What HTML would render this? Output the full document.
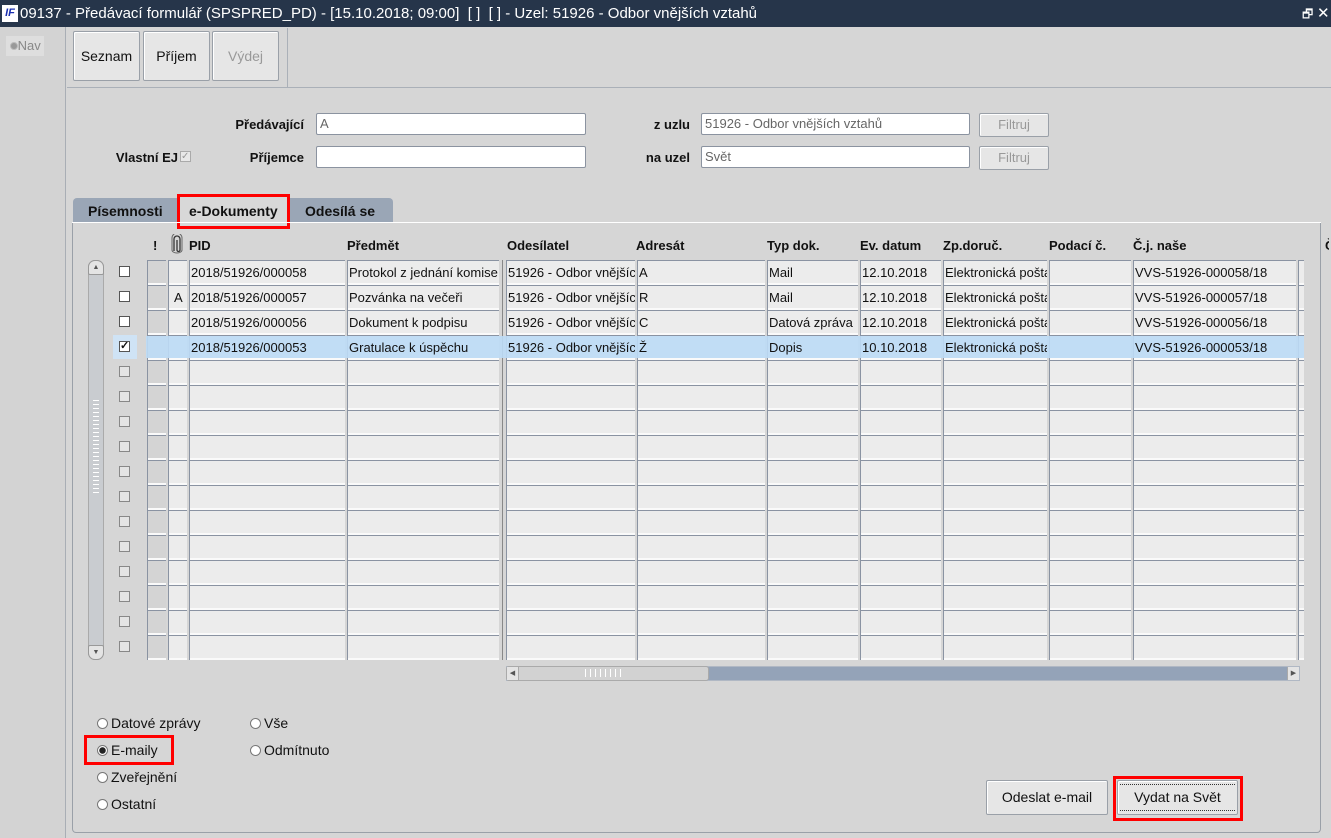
<!DOCTYPE html>
<html><head><meta charset="utf-8">
<style>
*{margin:0;padding:0;box-sizing:border-box}
body{width:1331px;height:838px;overflow:hidden;background:#d6d6d6;font-family:"Liberation Sans",Arial,sans-serif;font-size:13px;color:#111;position:relative}
.a{position:absolute}
.title{left:0;top:0;width:1331px;height:27px;background:#26354a;color:#fff;font-size:15px;line-height:28px;padding-left:20px;white-space:nowrap}
.btn{position:absolute;background:#e6e6e6;border:1px solid #9aa0a8;border-radius:2px;text-align:center;font-size:14px;box-shadow:inset 1px 1px 0 #fff}
.lbl{position:absolute;font-weight:bold;font-size:13px;text-align:right}
.inp{position:absolute;background:#fff;border:1px solid #8b93a0;border-radius:2px;height:22px;font-size:13px;line-height:20px;padding-left:3px;color:#666}
.col{position:absolute;top:260px;height:400px;border-left:1px solid #8a93a2;background:repeating-linear-gradient(to bottom,#8a93a2 0 1px,#ececec 1px 23px,#fafafa 23px 25px)}
.t{position:absolute;font-size:13px;white-space:nowrap;overflow:hidden;line-height:25px;padding-left:2px}
.h{position:absolute;top:238px;font-weight:bold;font-size:13px}
.cb{position:absolute;left:119px;width:11px;height:11px;border:1px solid #555;background:#fff}
.cbg{position:absolute;left:119px;width:11px;height:11px;border:1px solid #888;background:#e4e4e4}
.rad{position:absolute;width:11px;height:11px;border-radius:50%;border:1px solid #777;background:#fff}
.rt{position:absolute;font-size:14px}
</style></head><body>
<div class="a title"><span style="position:absolute;left:2px;top:5px;width:16px;height:17px;background:#fff;color:#1a2fb0;font-size:11px;font-weight:bold;font-style:italic;line-height:17px;text-align:center">IF</span>09137 - Předávací formulář (SPSPRED_PD) - [15.10.2018; 09:00]&nbsp; [ ]&nbsp; [ ] - Uzel: 51926 - Odbor vnějších vztahů
<span style="position:absolute;left:1302px;top:0;font-size:12px">🗗</span><span style="position:absolute;left:1317px;top:0;font-size:15px">✕</span></div>
<div class="a" style="left:0;top:27px;width:66px;height:811px;background:#d3d3d3;border-right:1px solid #a9aeb5"></div>
<div class="a" style="left:6px;top:36px;width:38px;height:20px;background:#dedede;color:#888;font-size:13px;line-height:20px">&nbsp;<span style="display:inline-block;width:8px;height:8px;border-radius:50%;background:#999;border:1px solid #bbb"></span>Nav</div>
<div class="a" style="left:67px;top:87px;width:1264px;height:1px;background:#aab0b8"></div>
<div class="a" style="left:287px;top:28px;width:1px;height:59px;background:#aab0b8"></div>
<div class="btn" style="left:73px;top:31px;width:67px;height:50px;line-height:48px">Seznam</div>
<div class="btn" style="left:143px;top:31px;width:67px;height:50px;line-height:48px">Příjem</div>
<div class="btn" style="left:212px;top:31px;width:67px;height:50px;line-height:48px;color:#999">Výdej</div>
<div class="lbl" style="left:200px;top:117px;width:104px">Předávající</div>
<div class="inp" style="left:316px;top:113px;width:270px">A</div>
<div class="lbl" style="left:90px;top:150px;width:88px">Vlastní EJ</div>
<div class="a" style="left:180px;top:151px;width:11px;height:11px;border:1px solid #aaa;background:#e8e8e8;color:#999;font-size:10px;line-height:9px">✓</div>
<div class="lbl" style="left:200px;top:150px;width:104px">Příjemce</div>
<div class="inp" style="left:316px;top:146px;width:270px"></div>
<div class="lbl" style="left:620px;top:117px;width:70px">z uzlu</div>
<div class="inp" style="left:701px;top:113px;width:269px">51926 - Odbor vnějších vztahů</div>
<div class="lbl" style="left:620px;top:150px;width:70px">na uzel</div>
<div class="inp" style="left:701px;top:146px;width:269px">Svět</div>
<div class="btn" style="left:979px;top:113px;width:70px;height:24px;line-height:22px;font-size:13px;color:#999">Filtruj</div>
<div class="btn" style="left:979px;top:146px;width:70px;height:24px;line-height:22px;font-size:13px;color:#999">Filtruj</div>
<div class="a" style="left:73px;top:198px;width:320px;height:25px;background:#9aa6b6;border-radius:4px 4px 0 0"></div>
<div class="a" style="left:88px;top:203px;font-weight:bold;font-size:14px">Písemnosti</div>
<div class="a" style="left:180px;top:197px;width:107px;height:28px;background:#d8d8d8"></div>
<div class="a" style="left:189px;top:203px;font-weight:bold;font-size:14px">e-Dokumenty</div>
<div class="a" style="left:305px;top:203px;font-weight:bold;font-size:14px">Odesílá se</div>
<div class="a" style="left:177px;top:194px;width:113px;height:35px;border:3px solid #f00"></div>
<div class="a" style="left:72px;top:223px;width:1249px;height:610px;border:1px solid #9aa0a8;border-top:none;border-radius:0 0 4px 4px"></div>
<div class="a" style="left:72px;top:222px;width:1249px;height:1px;background:#fff"></div>
<div class="h" style="left:153px">!</div>
<svg class="a" style="left:170px;top:234px" width="14" height="20" viewBox="0 0 14 20"><path d="M4 17V5a3 3 0 0 1 6 0v11a1.5 1.5 0 0 1-3 0V6" fill="none" stroke="#333" stroke-width="1.3"/><path d="M2 16V4a5 5 0 0 1 10 0v12a5 3 0 0 1-10 0" fill="none" stroke="#666" stroke-width="1"/></svg>
<div class="h" style="left:189px">PID</div>
<div class="h" style="left:347px">Předmět</div>
<div class="h" style="left:507px">Odesílatel</div>
<div class="h" style="left:636px">Adresát</div>
<div class="h" style="left:767px">Typ dok.</div>
<div class="h" style="left:860px">Ev. datum</div>
<div class="h" style="left:943px">Zp.doruč.</div>
<div class="h" style="left:1049px">Podací č.</div>
<div class="h" style="left:1133px">Č.j. naše</div>
<div class="h" style="left:1325px;width:4px;overflow:hidden">Č</div>
<div class="col" style="left:147px;width:19px;background:repeating-linear-gradient(to bottom,#8a93a2 0 1px,#d4d4d4 1px 23px,#fafafa 23px 25px)"></div>
<div class="col" style="left:168px;width:19px"></div>
<div class="col" style="left:189px;width:156px"></div>
<div class="col" style="left:347px;width:152px"></div>
<div class="a" style="left:502px;top:260px;width:1px;height:400px;background:#888"></div>
<div class="col" style="left:506px;width:129px"></div>
<div class="col" style="left:637px;width:128px"></div>
<div class="col" style="left:767px;width:91px"></div>
<div class="col" style="left:860px;width:81px"></div>
<div class="col" style="left:943px;width:104px"></div>
<div class="col" style="left:1049px;width:82px"></div>
<div class="col" style="left:1133px;width:163px"></div>
<div class="col" style="left:1298px;width:6px"></div>
<div class="a" style="left:146px;top:336px;width:1158px;height:22px;background:#bcdcf6;opacity:.9"></div>
<div class="a" style="left:113px;top:335px;width:24px;height:24px;background:#cfe3f5"></div>
<div class="t" style="left:189px;top:260px">2018/51926/000058</div>
<div class="t" style="left:347px;top:260px;width:151px">Protokol z jednání komise</div>
<div class="t" style="left:506px;top:260px;width:129px">51926 - Odbor vnějších</div>
<div class="t" style="left:637px;top:260px">A</div>
<div class="t" style="left:767px;top:260px">Mail</div>
<div class="t" style="left:860px;top:260px">12.10.2018</div>
<div class="t" style="left:943px;top:260px;width:104px">Elektronická pošta</div>
<div class="t" style="left:1133px;top:260px">VVS-51926-000058/18</div>
<div class="t" style="left:172px;top:285px">A</div>
<div class="t" style="left:189px;top:285px">2018/51926/000057</div>
<div class="t" style="left:347px;top:285px">Pozvánka na večeři</div>
<div class="t" style="left:506px;top:285px;width:129px">51926 - Odbor vnějších</div>
<div class="t" style="left:637px;top:285px">R</div>
<div class="t" style="left:767px;top:285px">Mail</div>
<div class="t" style="left:860px;top:285px">12.10.2018</div>
<div class="t" style="left:943px;top:285px;width:104px">Elektronická pošta</div>
<div class="t" style="left:1133px;top:285px">VVS-51926-000057/18</div>
<div class="t" style="left:189px;top:310px">2018/51926/000056</div>
<div class="t" style="left:347px;top:310px">Dokument k podpisu</div>
<div class="t" style="left:506px;top:310px;width:129px">51926 - Odbor vnějších</div>
<div class="t" style="left:637px;top:310px">C</div>
<div class="t" style="left:767px;top:310px;width:92px">Datová zpráva</div>
<div class="t" style="left:860px;top:310px">12.10.2018</div>
<div class="t" style="left:943px;top:310px;width:104px">Elektronická pošta</div>
<div class="t" style="left:1133px;top:310px">VVS-51926-000056/18</div>
<div class="t" style="left:189px;top:335px">2018/51926/000053</div>
<div class="t" style="left:347px;top:335px">Gratulace k úspěchu</div>
<div class="t" style="left:506px;top:335px;width:129px">51926 - Odbor vnějších</div>
<div class="t" style="left:637px;top:335px">Ž</div>
<div class="t" style="left:767px;top:335px">Dopis</div>
<div class="t" style="left:860px;top:335px">10.10.2018</div>
<div class="t" style="left:943px;top:335px;width:104px">Elektronická pošta</div>
<div class="t" style="left:1133px;top:335px">VVS-51926-000053/18</div>
<div class="cb" style="top:291px"></div>
<div class="cb" style="top:316px"></div>
<div class="cb" style="top:341px;font-size:11px;line-height:9px;font-weight:bold">✓</div>
<div class="cb" style="top:266px"></div>
<div class="cbg" style="top:366px"></div><div class="cbg" style="top:391px"></div><div class="cbg" style="top:416px"></div><div class="cbg" style="top:441px"></div><div class="cbg" style="top:466px"></div><div class="cbg" style="top:491px"></div><div class="cbg" style="top:516px"></div><div class="cbg" style="top:541px"></div><div class="cbg" style="top:566px"></div><div class="cbg" style="top:591px"></div><div class="cbg" style="top:616px"></div><div class="cbg" style="top:641px"></div>
<div class="a" style="left:88px;top:260px;width:16px;height:400px;background:#c9ccd0;border:1px solid #aaa;border-radius:7px"></div>
<div class="a" style="left:88px;top:260px;width:16px;height:15px;background:#e4e4e4;border:1px solid #999;border-radius:7px 7px 2px 2px;font-size:7px;text-align:center;line-height:13px;color:#555">▲</div>
<div class="a" style="left:88px;top:645px;width:16px;height:15px;background:#e4e4e4;border:1px solid #999;border-radius:2px 2px 7px 7px;font-size:7px;text-align:center;line-height:13px;color:#555">▼</div>
<div class="a" style="left:93px;top:400px;width:6px;height:95px;background:repeating-linear-gradient(to bottom,#fff 0 1px,transparent 1px 4px)"></div>
<div class="a" style="left:506px;top:666px;width:794px;height:15px;background:#94a3b8;border:1px solid #b0b8c4"></div>
<div class="a" style="left:506px;top:666px;width:203px;height:15px;background:#d2d2d2;border:1px solid #aaa;border-radius:3px"></div>
<div class="a" style="left:507px;top:667px;width:12px;height:13px;background:#e4e4e4;border-right:1px solid #aaa;font-size:7px;line-height:13px;text-align:center;color:#555">◀</div>
<div class="a" style="left:1287px;top:667px;width:12px;height:13px;background:#e4e4e4;border-left:1px solid #aaa;font-size:7px;line-height:13px;text-align:center;color:#555">▶</div>
<div class="a" style="left:585px;top:669px;width:40px;height:8px;background:repeating-linear-gradient(to right,#fff 0 1px,transparent 1px 5px)"></div>
<div class="rad" style="left:97px;top:718px"></div><div class="rt" style="left:111px;top:715px">Datové zprávy</div>
<div class="rad" style="left:97px;top:745px;background:radial-gradient(circle,#222 0 3px,#fff 3.5px)"></div><div class="rt" style="left:111px;top:742px">E-maily</div>
<div class="rad" style="left:97px;top:772px"></div><div class="rt" style="left:111px;top:769px">Zveřejnění</div>
<div class="rad" style="left:97px;top:799px"></div><div class="rt" style="left:111px;top:796px">Ostatní</div>
<div class="rad" style="left:250px;top:718px"></div><div class="rt" style="left:264px;top:715px">Vše</div>
<div class="rad" style="left:250px;top:745px"></div><div class="rt" style="left:264px;top:742px">Odmítnuto</div>
<div class="a" style="left:84px;top:735px;width:90px;height:30px;border:3px solid #f00"></div>
<div class="btn" style="left:986px;top:780px;width:122px;height:35px;line-height:33px">Odeslat e-mail</div>
<div class="btn" style="left:1117px;top:780px;width:121px;height:35px;line-height:33px"><div style="position:absolute;left:2px;top:3px;right:2px;bottom:3px;border-top:1px dotted #333;border-bottom:1px dotted #333"></div>Vydat na Svět</div>
<div class="a" style="left:1113px;top:776px;width:130px;height:45px;border:3px solid #f00"></div>
</body></html>
